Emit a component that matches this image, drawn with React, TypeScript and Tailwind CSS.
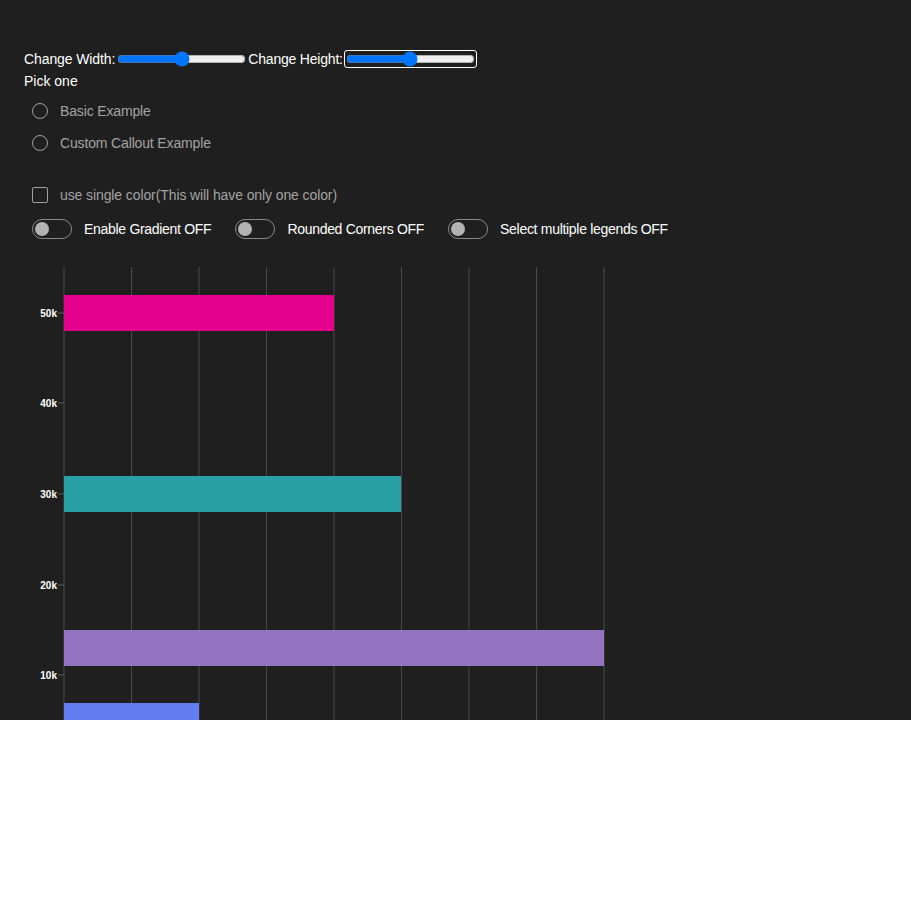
import React from 'react';

const font = { fontFamily: '"Liberation Sans", Arial, sans-serif' };

const Radio: React.FC<{ label: string }> = ({ label }) => (
    <div className="flex h-8 items-center gap-3 pl-2">
        <span className="h-4 w-4 rounded-full border border-[#a0a0a0]" />
        <span className="text-sm tracking-[-0.15px] text-[#a3a3a3]">{label}</span>
    </div>
);

const Toggle: React.FC<{ label: string }> = ({ label }) => (
    <div className="flex items-center gap-3">
        <span className="flex h-5 w-10 items-center rounded-full border border-[#8a8a8a] px-[2px]">
            <span className="h-[14px] w-[14px] rounded-full bg-[#b3b3b3]" />
        </span>
        <span className="text-sm tracking-[-0.3px] text-white">{label}</span>
    </div>
);

const gridX = [64, 131.5, 199, 266.5, 334, 401.5, 469, 536.5, 604];
const ticks = [
    { label: '50k', y: 46 },
    { label: '40k', y: 136 },
    { label: '30k', y: 227 },
    { label: '20k', y: 318 },
    { label: '10k', y: 408 },
];
const bars = [
    { color: '#e3008c', y: 28, w: 270 },
    { color: '#2aa0a4', y: 209, w: 337 },
    { color: '#9373c0', y: 363, w: 540 },
    { color: '#637cef', y: 436, w: 135 },
];

const Chart: React.FC = () => (
    <svg width={911} height={453} className="block">
        {gridX.map((x) => (
            <line key={x} x1={x} x2={x} y1={0} y2={453} stroke="#4a4a4a" strokeWidth={1} />
        ))}
        {ticks.map((t) => (
            <g key={t.label}>
                <line x1={58} x2={64} y1={t.y} y2={t.y} stroke="#5a5a5a" />
                <text x={57} y={t.y + 3.5} textAnchor="end" fill="#ffffff" fontSize={10} fontWeight={700} style={font}>
                    {t.label}
                </text>
            </g>
        ))}
        {bars.map((b) => (
            <rect key={b.color} x={64} y={b.y} width={b.w} height={36} fill={b.color} />
        ))}
    </svg>
);

export default function App() {
    return (
        <div className="h-[720px] overflow-hidden bg-[#1f1f1f]" style={font}>
            <div className="px-6 pt-[48px]">
                <div className="flex h-[22px] items-center text-sm text-white">
                    <span className="tracking-[-0.1px]">Change Width:</span>
                    <input type="range" defaultValue={50} className="m-0 ml-[2px] w-[129px]" />
                    <span className="ml-[2px] tracking-[-0.2px]">Change Height:</span>
                    <span className="ml-[1px] flex h-[18px] items-center rounded-[3px] border border-white px-[1px]">
                        <input type="range" defaultValue={50} className="m-0 w-[129px]" />
                    </span>
                </div>
                <div className="mt-[1px] h-5 text-sm leading-5 text-white">Pick one</div>
                <div className="mt-[4px]">
                    <Radio label="Basic Example" />
                    <Radio label="Custom Callout Example" />
                </div>
                <div className="mt-5 flex h-8 items-center gap-3 pl-2">
                    <span className="h-4 w-4 rounded-[2px] border border-[#a0a0a0]" />
                    <span className="text-sm tracking-[-0.1px] text-[#a3a3a3]">use single color(This will have only one color)</span>
                </div>
                <div className="mt-2 flex items-center gap-6 pl-2">
                    <Toggle label="Enable Gradient OFF" />
                    <Toggle label="Rounded Corners OFF" />
                    <Toggle label="Select multiple legends OFF" />
                </div>
            </div>
            <div className="mt-7">
                <Chart />
            </div>
        </div>
    );
}
